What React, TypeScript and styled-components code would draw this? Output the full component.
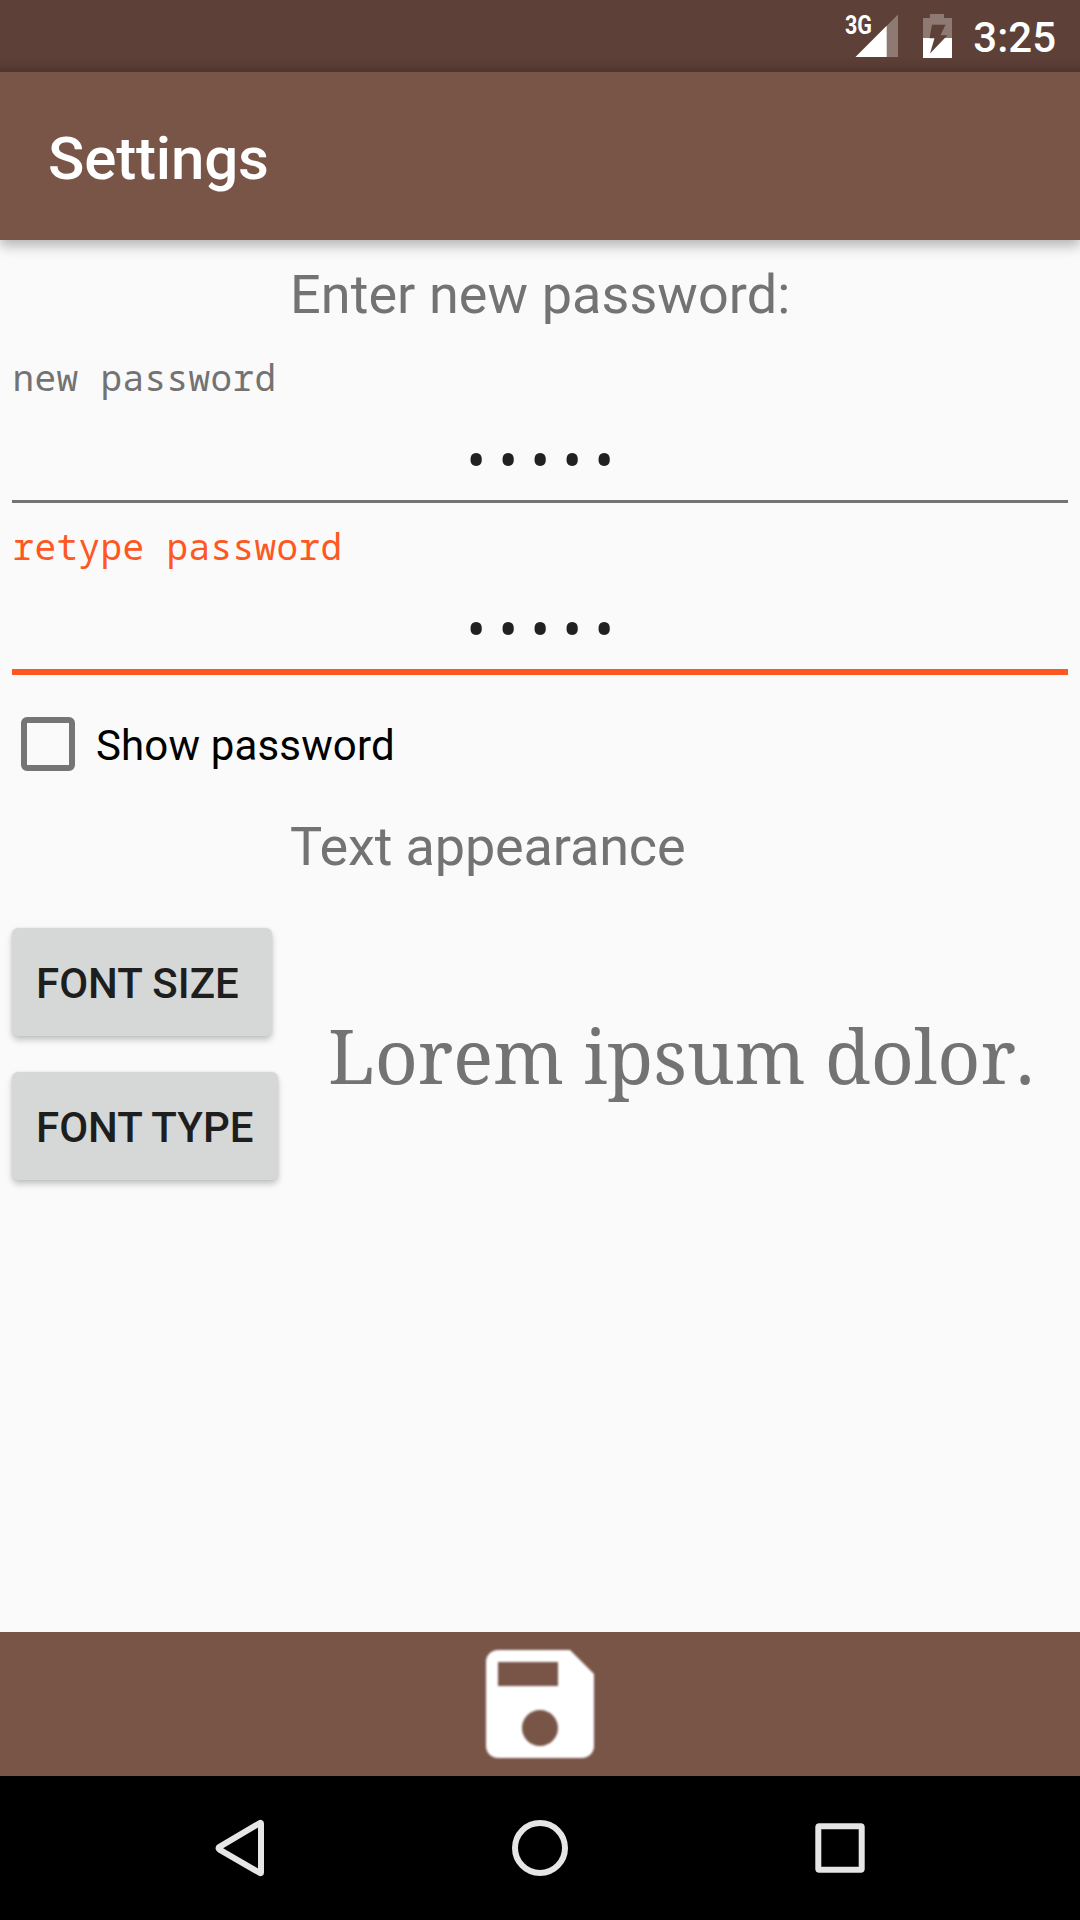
import React from 'react';
import styled, { createGlobalStyle } from 'styled-components';

const GlobalStyle = createGlobalStyle`
  *, *::before, *::after { box-sizing: border-box; }
  html, body { margin: 0; padding: 0; background: #fafafa; }
  body { font-family: Roboto, sans-serif; overflow: hidden; }
`;

const Screen = styled.div`
  display: flex;
  flex-direction: column;
  width: 1080px;
  height: 1920px;
  background: #fafafa;
  overflow: hidden;
`;

const StatusBar = styled.header`
  display: flex;
  align-items: flex-start;
  justify-content: flex-end;
  height: 72px;
  padding: 0 24px 0 0;
  background: linear-gradient(#5d4037 0, #5d4037 58px, #573c34 65px, #4d352e 72px);
  color: #fff;
`;

const SignalIcon = styled.svg`
  width: 54px;
  height: 72px;
  margin-right: 24px;
`;

const BatteryIcon = styled.svg`
  width: 30px;
  height: 72px;
  margin-right: 21px;
`;

const Clock = styled.time`
  font-size: 42px;
  font-weight: 500;
  line-height: 75px;
`;

const AppBar = styled.div`
  display: flex;
  align-items: center;
  height: 168px;
  flex: none;
  padding: 5px 48px 0;
  background: #795548;
  box-shadow: 0 6px 12px rgba(0, 0, 0, 0.28);
  clip-path: inset(0 0 -30px 0);
`;

const Title = styled.h1`
  margin: 0;
  color: #fff;
  font-size: 60px;
  font-weight: 500;
  letter-spacing: -0.15px;
  line-height: 72px;
`;

const Content = styled.main`
  display: flex;
  flex-direction: column;
  flex: 1;
  padding: 23px 12px 0;
`;

const Heading = styled.h2`
  margin: 0;
  padding-left: 278px;
  color: #737373;
  font-size: 54px;
  font-weight: 400;
  letter-spacing: 0.07px;
  line-height: 64px;
`;

const Fields = styled.div`
  padding-top: 7px;
`;

const Field = styled.label<{ $active?: boolean }>`
  display: flex;
  flex-direction: column;
  height: ${p => (p.$active ? 172 : 169)}px;
  border-bottom: ${p => (p.$active ? '6px solid #ff5722' : '3px solid #737373')};
  color: ${p => (p.$active ? '#ff5722' : '#737373')};
`;

const FieldLabel = styled.span`
  font-family: 'Droid Sans Mono', 'Noto Sans Mono', 'DejaVu Sans Mono', monospace;
  font-size: 36px;
  letter-spacing: 0.4px;
  line-height: 42px;
  padding: 23px 0 0 0.5px;
`;

const FieldValue = styled.span`
  align-self: center;
  margin-top: 24px;
  padding-left: 12px;
  color: #212121;
  font-family: 'Open Sans', sans-serif;
  font-size: 54px;
  letter-spacing: 11.7px;
  line-height: 72px;
`;

const CheckRow = styled.label`
  display: flex;
  align-items: center;
  gap: 21px;
  height: 54px;
  margin-top: 42px;
  padding-left: 9px;
  color: #000;
  font-size: 42px;
  letter-spacing: 0.15px;
  line-height: 54px;
`;

const CheckBox = styled.span`
  width: 54px;
  height: 54px;
  border: 6px solid #757575;
  border-radius: 6px;
`;

const CheckText = styled.span`
  padding-top: 3px;
`;

const AppearanceHeading = styled(Heading)`
  margin-top: 44px;
  letter-spacing: -0.13px;
`;

const Appearance = styled.section`
  display: flex;
  margin-top: 49px;
`;

const Buttons = styled.div`
  display: flex;
  flex-direction: column;
  align-items: flex-start;
  gap: 36px;
  width: 266px;
`;

const Button = styled.button<{ $width: number }>`
  width: ${p => p.$width}px;
  height: 108px;
  padding: 3px 0 0 24px;
  border: 0;
  border-radius: 6px;
  background: #d6d8d7;
  box-shadow: 0 4px 6px rgba(0, 0, 0, 0.22), 0 0 3px rgba(0, 0, 0, 0.08);
  color: #1e1e1e;
  font-family: Roboto, sans-serif;
  font-size: 42px;
  font-weight: 500;
  text-align: left;
  white-space: nowrap;
`;

const Sample = styled.p`
  margin: 77px 0 0 50px;
  color: #737373;
  font-family: 'Noto Serif', 'Droid Serif', 'DejaVu Serif', serif;
  font-size: 75px;
  font-kerning: none;
  letter-spacing: -0.07px;
  line-height: 100px;
  white-space: nowrap;
`;

const SaveBar = styled.div`
  display: flex;
  justify-content: center;
  height: 144px;
  background: #795548;
`;

const SaveIcon = styled.svg`
  width: 144px;
  height: 144px;
  filter: blur(1.1px);
`;

const NavBar = styled.nav`
  display: flex;
  justify-content: center;
  align-items: center;
  gap: 156px;
  height: 144px;
  background: #000;
`;

const NavIcon = styled.svg`
  width: 144px;
  height: 144px;
  fill: none;
  stroke: #e6e6e6;
  stroke-width: 6;
  stroke-linejoin: round;
`;

const NetworkType = styled.text`
  font-family: Roboto, sans-serif;
  font-size: 25px;
  font-weight: 700;
  fill: #fff;
`;

export default function App() {
  return (
    <Screen>
      <GlobalStyle />
      <StatusBar>
        <SignalIcon viewBox="0 0 54 72">
          <path d="M54 14.5V57H11.5Z" fill="#8e7973" />
          <path d="M42.7 25.8V57H11.5Z" fill="#fff" />
          <NetworkType x="1" y="33.5" textLength="27" lengthAdjust="spacingAndGlyphs">3G</NetworkType>
        </SignalIcon>
        <BatteryIcon viewBox="0 0 30 72">
          <path d="M1 18H8V14H22V18H30V38H1Z" fill="#8e7973" />
          <path d="M1 38H30V58H1Z" fill="#fff" />
          <path d="M10 24.7H23.5L18.5 35.2H25.5L8 53.5L12.5 38.3H7.5Z" fill="#5d4037" />
        </BatteryIcon>
        <Clock>3:25</Clock>
      </StatusBar>
      <AppBar>
        <Title>Settings</Title>
      </AppBar>
      <Content>
        <Heading>Enter new password:</Heading>
        <Fields>
          <Field>
            <FieldLabel>new password</FieldLabel>
            <FieldValue>•••••</FieldValue>
          </Field>
          <Field $active>
            <FieldLabel>retype password</FieldLabel>
            <FieldValue>•••••</FieldValue>
          </Field>
        </Fields>
        <CheckRow>
          <CheckBox />
          <CheckText>Show password</CheckText>
        </CheckRow>
        <AppearanceHeading>Text appearance</AppearanceHeading>
        <Appearance>
          <Buttons>
            <Button $width={260}>FONT SIZE</Button>
            <Button $width={266}>FONT TYPE</Button>
          </Buttons>
          <Sample>Lorem ipsum dolor.</Sample>
        </Appearance>
      </Content>
      <SaveBar>
        <SaveIcon viewBox="0 0 24 24">
          <path
            fill="#fff"
            d="M17 3H5c-1.11 0-2 .9-2 2v14c0 1.1.89 2 2 2h14c1.1 0 2-.9 2-2V7l-4-4zm-5 16c-1.66 0-3-1.34-3-3s1.34-3 3-3 3 1.34 3 3-1.34 3-3 3zm3-10H5V5h10v4z"
          />
        </SaveIcon>
      </SaveBar>
      <NavBar>
        <NavIcon viewBox="0 0 144 144">
          <path d="M51.5 70.8L92 47Q93 46.5 93 47.5V96.5Q93 97.5 92 97L51.5 73.6Q49.5 72.2 51.5 70.8Z" />
        </NavIcon>
        <NavIcon viewBox="0 0 144 144">
          <circle cx="72" cy="72" r="25" />
        </NavIcon>
        <NavIcon viewBox="0 0 144 144">
          <rect x="50.3" y="50.3" width="43.4" height="43.4" rx="1" />
        </NavIcon>
      </NavBar>
    </Screen>
  );
}
